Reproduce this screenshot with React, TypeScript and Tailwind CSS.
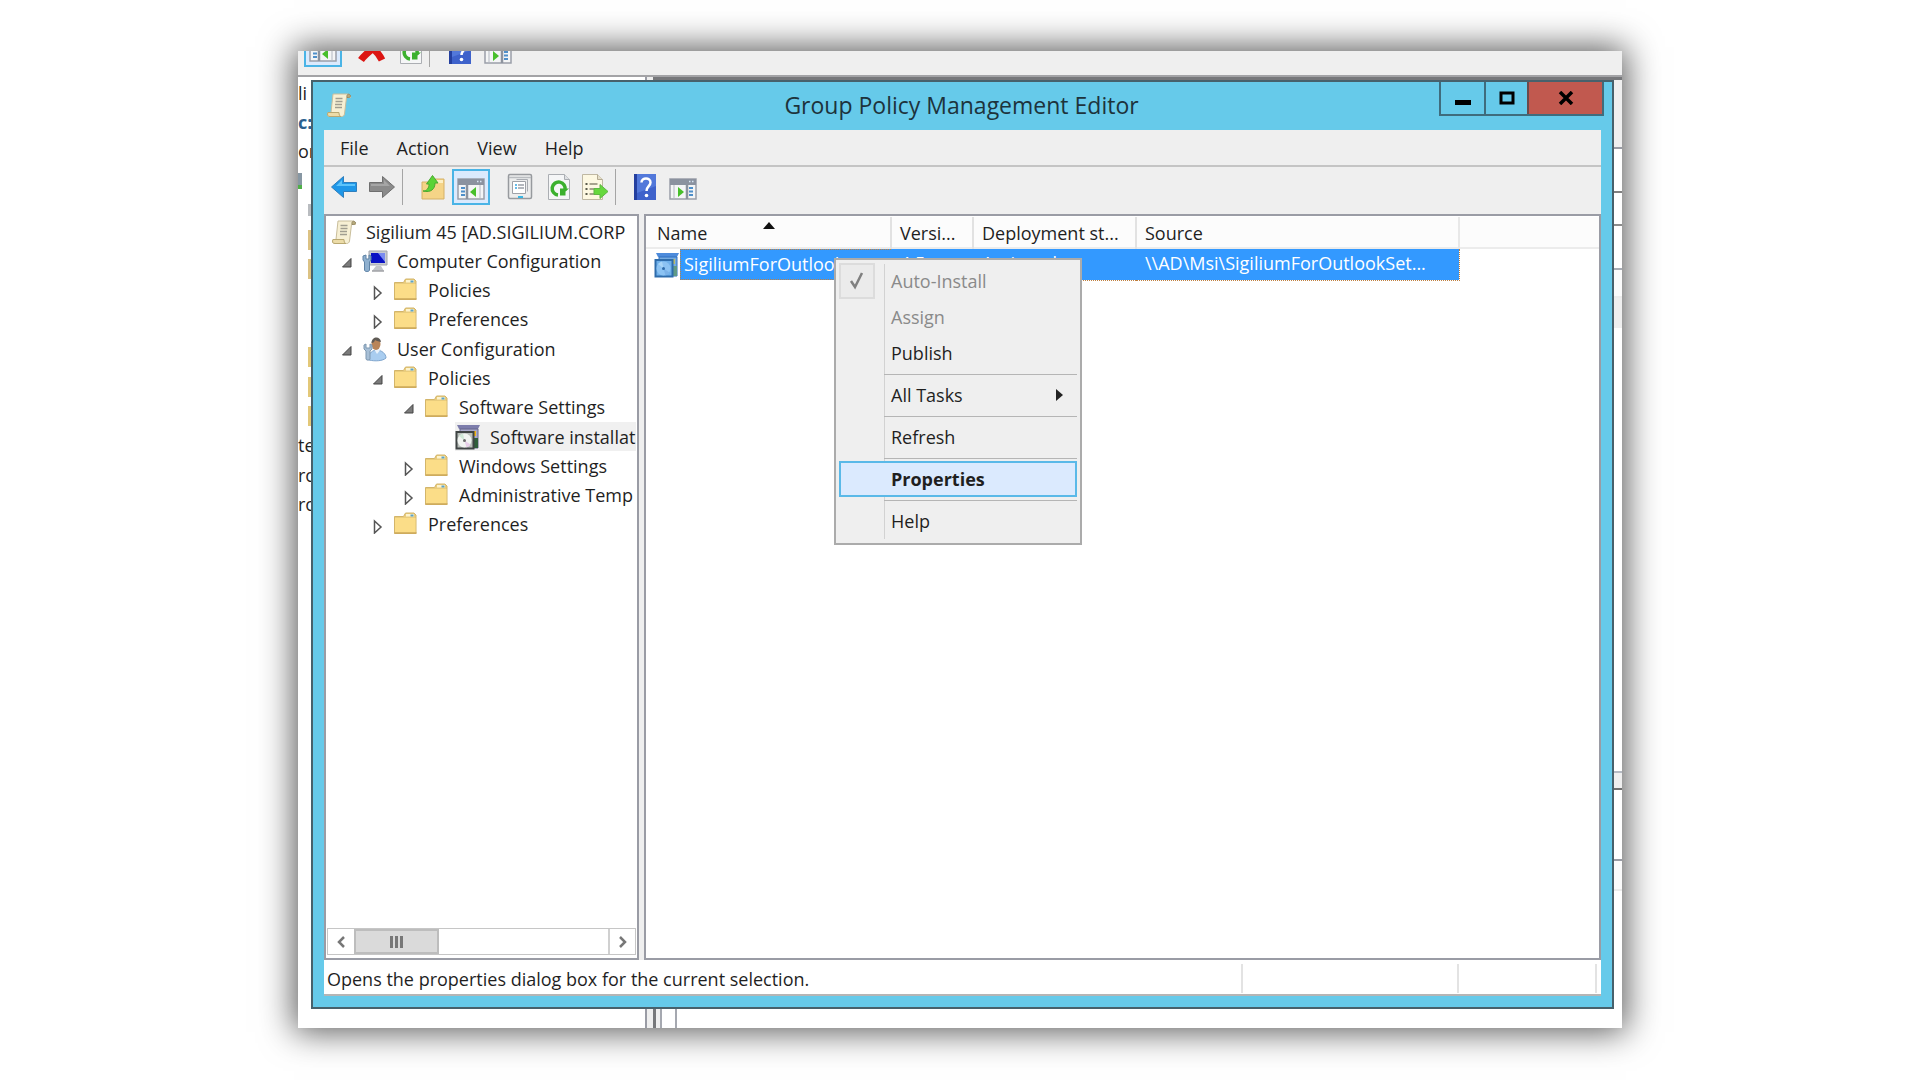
import type { ReactNode } from "react";

type TreeNode = {
  label: string;
  indent: string;
  icon: ReactNode;
  state?: "open" | "closed";
  selected?: boolean;
};

function ScrollIcon() {
  return (
    <svg width="26" height="26" viewBox="0 0 26 26" className="shrink-0">
      <path d="M7 2h14c2 0 4 1 3.500 3.500h-4L18.500 22c-.5 2-1.500 2.500-3 2.500H4c-2.500 0-3-1.500-2-4h3z" fill="#f7f0d4" stroke="#c9be9b" />
      <path d="M21 5.500c-.5-2 .5-4 2.500-3s1 3.500-2.500 3z" fill="#b9ab7c" stroke="#968a66" />
      <path d="M2 20.500h11c0 2 .5 4 2 4H4c-2.500 0-3-2-2-4z" fill="#ecdca8" stroke="#b9a871" />
      <path d="M9.500 6.500h7M9.500 9.500h7M9 12.500h7M9 15.500h7" stroke="#a19e90" strokeWidth="1.500" />
    </svg>
  );
}

function FolderIcon() {
  return (
    <svg width="26" height="26" viewBox="0 0 26 26" className="shrink-0">
      <path d="M1.500 5.500h9L12.500 2H21l2 2v18.500H1.500z" fill="#e9cc7c" stroke="#d3b56a" />
      <path d="M13 3h8v2.500h-8z" fill="#fdf3cd" />
      <path d="M17.500 3.500h3v2h-3z" fill="#5ba3c9" />
      <path d="M2 7h20.500v15H2z" fill="#fbdd88" />
      <path d="M1.500 22h22" stroke="#cda95a" strokeWidth="1.500" />
    </svg>
  );
}

function ComputerIcon() {
  return (
    <svg width="26" height="26" viewBox="0 0 26 26" className="shrink-0">
      <path d="M7 3h18v14H7z" fill="#c9ccd2" stroke="#a2a5ab" />
      <path d="M9 5h14v10H9z" fill="#0a12c4" />
      <path d="M16 5h7v9z" fill="#7b8cf0" />
      <path d="M14 18h5l3 5H10z" fill="#c3c5c9" />
      <path d="M10 23h12" stroke="#a0a2a6" strokeWidth="1.500" />
      <path d="M1 8v4l1.500 2V22c0 2 5 2 5 0v-8L9 12V8L7 7v4H4V7z" fill="#8fb0cf" stroke="#5f83a6" />
    </svg>
  );
}

function UserIcon() {
  return (
    <svg width="26" height="26" viewBox="0 0 26 26" className="shrink-0">
      <path d="M7 24c-1-6 2-9 7-10 6 0 10 4 10 8-3 3-11 3.500-17 2z" fill="#a9cdf0" stroke="#7fa5cd" />
      <path d="M12 13l3 5 4-5z" fill="#e9f2fb" />
      <ellipse cx="14" cy="8" rx="4.500" ry="6" fill="#b98458" />
      <path d="M9.500 7c0-7 9-7.500 9.500-1-3-.5-5-1.500-6-2-.5 2-1.500 3-3.500 3z" fill="#5f5a55" />
      <path d="M2 9v4l2 2v8c0 1.500 4 1.500 4 0v-8l2-2V9L8 8v4H4V8z" fill="#a7bfd6" stroke="#7d97b0" />
    </svg>
  );
}

function InstallIcon({ tinted = false }: { tinted?: boolean }) {
  return (
    <svg width="26" height="26" viewBox="0 0 26 26" className="shrink-0">
      <path d="M2 1h23l-2 4H4z" fill={tinted ? "#4d8bdb" : "#7d7dac"} />
      <path d="M5 5h18v19H5z" fill={tinted ? "#75abe0" : "#a9a9c9"} stroke={tinted ? "#2f6fc0" : "#66668c"} />
      <path d="M16 7h5v5h-5z" fill={tinted ? "#b7b96b" : "#f2b416"} />
      <path d="M19 14h4v10h-4z" fill={tinted ? "#5f9a86" : "#2f5f3b"} />
      <path d="M1.500 8H18.500V24.500H1.500z" fill={tinted ? "#6fb0ea" : "#b9bfba"} stroke={tinted ? "#2e6cab" : "#3f4444"} strokeWidth="2" />
      <circle cx="9.500" cy="16.500" r="7" fill={tinted ? "#8cc3f3" : "#f1f4f1"} />
      <path d="M9.500 16.500L4 12a7 7 0 0 1 4-2.500z" fill={tinted ? "#a8d5f8" : "#cfe8d6"} />
      <path d="M9.500 16.500l6 4a7 7 0 0 1-4 3z" fill={tinted ? "#7bb2e8" : "#e6cfe8"} />
      <circle cx="9.500" cy="16.500" r="1.500" fill={tinted ? "#2e6cab" : "#6b6b6b"} />
    </svg>
  );
}

function ArrowIcon({ forward = false }: { forward?: boolean }) {
  return forward ? (
    <svg width="28" height="26" viewBox="0 0 28 26">
      <path d="M1.500 8.500h13V2.500L26.500 13 14.500 23.500v-6h-13z" fill="#8b8b8b" stroke="#6f6f6f" strokeLinejoin="round" />
      <path d="M3 10h13V6l6 6H3z" fill="#a6a6a6" />
    </svg>
  ) : (
    <svg width="28" height="26" viewBox="0 0 28 26">
      <path d="M26.500 8.500h-13V2.500L1.500 13l12 10.500v-6h13z" fill="#1e97e8" stroke="#2f7fbd" strokeLinejoin="round" />
      <path d="M25 10H12V6l-6 6h19z" fill="#5cc4fb" />
    </svg>
  );
}

function FolderUpIcon() {
  return (
    <svg width="26" height="28" viewBox="0 0 26 28">
      <path d="M2 9h9l3-3h10v20H2z" fill="#f5d487" stroke="#d5b166" />
      <path d="M16 7h7v3h-7z" fill="#fdf0c4" />
      <path d="M3 18c4 0 6-3 6-7H6.500l6-8.500L18 10h-3c0 6-4 10-12 8z" fill="#5bd336" stroke="#4aa930" />
    </svg>
  );
}

// Console window with a side pane; the arrow points at or away from it
function PaneIcon({ side }: { side: "left" | "right" }) {
  const flip = side === "right" ? "translate(28 0) scale(-1 1)" : undefined;
  return (
    <svg width="28" height="24" viewBox="0 0 28 24">
      <path d="M1 2h26v20H1z" fill="#f4f5f6" stroke="#9a9fa9" strokeWidth="1.500" />
      <path d="M1 2h26v6H1z" fill="#8b929f" />
      <path d="M20 4.500h1.500M23 4.500h1.500" stroke="#d8e6f4" strokeWidth="1.500" />
      <g transform={flip}>
        <path d="M10 8v14" stroke="#8d939e" strokeWidth="2.500" />
        <path d="M4 11h4M4 14.500h4M4 18h4" stroke="#4f8fc9" strokeWidth="2" />
        <path d="M19 10v10l-6-5z" fill="#48bf2b" />
        <path d="M23 8v14" stroke="#b3b8c1" />
      </g>
    </svg>
  );
}

function PropertiesIcon() {
  return (
    <svg width="26" height="28" viewBox="0 0 26 28">
      <rect x="1.500" y="1.500" width="23" height="24" rx="1.500" fill="#eceded" stroke="#979a9e" strokeWidth="1.500" />
      <path d="M2 4.500h22" stroke="#b9bcc0" strokeWidth="1.500" />
      <path d="M5.500 8.500h13v12h-13z" fill="#fff" stroke="#9fa2a8" />
      <path d="M9.500 6.500h11v12" fill="none" stroke="#a9acb2" />
      <path d="M8 12h2M8 15h2" stroke="#39a5df" strokeWidth="1.500" />
      <path d="M11 12h6M11 15h6" stroke="#9aa0a8" strokeWidth="1.500" />
      <path d="M11 24h5" stroke="#39b6e3" strokeWidth="2" />
    </svg>
  );
}

function RefreshIcon() {
  return (
    <svg width="24" height="28" viewBox="0 0 24 28">
      <path d="M1.500 1.500h16l5 5v20h-21z" fill="#f5f6f7" stroke="#abaeb3" />
      <path d="M17.500 1.500v5h5" fill="#dfe1e4" stroke="#abaeb3" />
      <path d="M11 22a6.500 6.500 0 1 1 7-5" fill="none" stroke="#3bb02e" strokeWidth="3.500" />
      <path d="M13 15.500h9l-3.500 3v4H13z" fill="#3bb02e" />
    </svg>
  );
}

function ExportIcon() {
  return (
    <svg width="28" height="28" viewBox="0 0 28 28">
      <path d="M1.500 1.500h15l5 5v20h-20z" fill="#fdf8e2" stroke="#bfb8a3" />
      <path d="M16.500 1.500v5h5" fill="#e5dfca" stroke="#b4ab93" />
      <path d="M4.500 11h2M4.500 16h2M4.500 21h2" stroke="#5b5b4b" strokeWidth="2" />
      <path d="M8.500 11h8M8.500 16h6M8.500 21h6" stroke="#8b8772" strokeWidth="1.500" />
      <path d="M13 15.500h6v-4l8 7-8 7v-4h-6z" fill="#66d83d" stroke="#5fb644" />
    </svg>
  );
}

function HelpIcon() {
  return (
    <svg width="24" height="28" viewBox="0 0 24 28">
      <path d="M1 1h22v26H1z" fill="#3e62cb" />
      <path d="M1 1h3v26H1z" fill="#243f9f" />
      <path d="M4 1h19v12L4 20z" fill="#5278da" />
      <path d="M8.500 9.500c0-5.500 9-5.500 9 0 0 3.500-4 4-4 8.500" fill="none" stroke="#fff" strokeWidth="2.500" />
      <circle cx="13.500" cy="22.500" r="1.800" fill="#fff" />
    </svg>
  );
}

const tree: TreeNode[] = [
  { label: "Sigilium 45 [AD.SIGILIUM.CORP", indent: "pl-0", icon: <ScrollIcon /> },
  { label: "Computer Configuration", indent: "pl-0", icon: <ComputerIcon />, state: "open" },
  { label: "Policies", indent: "pl-[31px]", icon: <FolderIcon />, state: "closed" },
  { label: "Preferences", indent: "pl-[31px]", icon: <FolderIcon />, state: "closed" },
  { label: "User Configuration", indent: "pl-0", icon: <UserIcon />, state: "open" },
  { label: "Policies", indent: "pl-[31px]", icon: <FolderIcon />, state: "open" },
  { label: "Software Settings", indent: "pl-[62px]", icon: <FolderIcon />, state: "open" },
  { label: "Software installat", indent: "pl-[124px]", icon: <InstallIcon />, selected: true },
  { label: "Windows Settings", indent: "pl-[62px]", icon: <FolderIcon />, state: "closed" },
  { label: "Administrative Temp", indent: "pl-[62px]", icon: <FolderIcon />, state: "closed" },
  { label: "Preferences", indent: "pl-[31px]", icon: <FolderIcon />, state: "closed" },
];

function Expander({ state }: { state: "open" | "closed" }) {
  return (
    <button type="button" aria-label={state === "open" ? "Collapse" : "Expand"} className="flex w-[31px] shrink-0 justify-center pt-1">
      <svg width="14" height="16" viewBox="0 0 14 16">
        {state === "open" ? (
          <path d="M11 3.500V12H2.500z" fill="#7b7b7b" stroke="#444" />
        ) : (
          <path d="M3.500 3l6.500 6-6.500 6z" fill="#fff" stroke="#555" strokeWidth="1.500" />
        )}
      </svg>
    </button>
  );
}

function Tree() {
  return (
    <ul className="grid h-[322px] auto-rows-fr pl-1">
      {tree.map((node, i) => (
        <li key={i} className={`flex min-w-0 items-center ${node.indent}`}>
          {node.state && <Expander state={node.state} />}
          <span
            className={`flex h-full min-w-0 flex-1 items-center gap-[9px] overflow-hidden whitespace-nowrap ${
              node.selected ? "bg-[#f0f0f0]" : ""
            }`}
          >
            {node.icon}
            {node.label}
          </span>
        </li>
      ))}
    </ul>
  );
}

function Separator() {
  return <span className="h-9 w-px bg-[#a5a5a5]" />;
}

function Toolbar() {
  return (
    <div className="flex h-[47px] items-center pb-2 pl-[6px]">
      <button type="button" aria-label="Back"><ArrowIcon /></button>
      <button type="button" aria-label="Forward" className="ml-[10px] mr-[6px]"><ArrowIcon forward /></button>
      <Separator />
      <button type="button" aria-label="Up one level" className="ml-[17px] mr-[6px]"><FolderUpIcon /></button>
      <button
        type="button"
        aria-label="Show console tree"
        className="flex h-9 w-[38px] items-center justify-center border-2 border-[#4ab4e6] bg-[#dbeafd] pt-1"
      >
        <PaneIcon side="left" />
      </button>
      <button type="button" aria-label="Properties" className="ml-[17px]"><PropertiesIcon /></button>
      <button type="button" aria-label="Refresh" className="ml-[14px]"><RefreshIcon /></button>
      <button type="button" aria-label="Export list" className="ml-[10px] mr-[6px]"><ExportIcon /></button>
      <Separator />
      <button type="button" aria-label="Help" className="ml-[17px]"><HelpIcon /></button>
      <button type="button" aria-label="Show action pane" className="ml-3 pt-1"><PaneIcon side="right" /></button>
    </div>
  );
}

function MenuItem({ label, disabled = false, children }: { label: string; disabled?: boolean; children?: ReactNode }) {
  return (
    <button
      type="button"
      role="menuitem"
      disabled={disabled}
      className="flex h-9 w-full items-center justify-between pb-px pl-[52px] pr-[14px] text-left disabled:text-[#8a8a8a]"
    >
      {label}
      {children}
    </button>
  );
}

function MenuLine() {
  return <div className="ml-[45px] flex h-[6px] items-center"><span className="h-px flex-1 bg-[#b5b5b5]" /></div>;
}

function ContextMenu() {
  return (
    <div
      role="menu"
      className="absolute left-[188px] top-[42px] w-[248px] border-2 border-[#ababab] bg-[#efefef] p-[3px] pb-1"
    >
      <span className="absolute bottom-1 left-[48px] top-1 w-px bg-[#d2d2d2]" />
      <div className="relative">
        <span className="absolute left-0 top-0 flex size-9 items-center justify-center border-2 border-[#dcdcdc] bg-[#ebebeb]">
          <svg width="18" height="20" viewBox="0 0 18 20">
            <path d="M3 10l4 6 7-14" fill="none" stroke="#808080" strokeWidth="2.500" />
          </svg>
        </span>
        <MenuItem label="Auto-Install" disabled />
        <MenuItem label="Assign" disabled />
        <MenuItem label="Publish" />
        <MenuLine />
        <MenuItem label="All Tasks">
          <svg width="7" height="12" viewBox="0 0 7 12"><path d="M0 0l7 6-7 6z" fill="#222" /></svg>
        </MenuItem>
        <MenuLine />
        <MenuItem label="Refresh" />
        <MenuLine />
        <button
          type="button"
          role="menuitem"
          className="flex h-9 w-full items-center border-2 border-[#5ab9e8] bg-[#dbeafe] pl-[50px] font-bold"
        >
          Properties
        </button>
        <MenuLine />
        <MenuItem label="Help" />
      </div>
    </div>
  );
}

function PackageList() {
  return (
    <table className="w-full table-fixed border-collapse whitespace-nowrap text-left">
      <colgroup>
        <col className="w-[245px]" />
        <col className="w-[82px]" />
        <col className="w-[163px]" />
        <col className="w-[323px]" />
        <col />
      </colgroup>
      <thead>
        <tr className="h-[31px] border-b-2 border-[#ececec] bg-[#fcfcfc]">
          <th className="relative border-r-2 border-[#e2e2e2] pl-[11px] pt-[2px] font-normal">
            Name
            <svg width="12" height="7" viewBox="0 0 12 7" className="absolute left-[117px] top-[5px]">
              <path d="M6 0l6 7H0z" fill="#111" />
            </svg>
          </th>
          <th className="border-r-2 border-[#e2e2e2] pl-2 pt-[2px] font-normal">Versi...</th>
          <th className="border-r-2 border-[#e2e2e2] pl-2 pt-[2px] font-normal">Deployment st...</th>
          <th className="border-r-2 border-[#e8e8e8] pl-2 pt-[2px] font-normal">Source</th>
          <th />
        </tr>
      </thead>
      <tbody>
        <tr className="h-[31px] text-white">
          <td className="p-0">
            <div className="flex h-[31px] items-center pl-2">
              <InstallIcon tinted />
              <span className="flex h-full min-w-0 flex-1 items-center overflow-hidden border border-r-0 border-dotted border-[#c08040] bg-[#3399ff] pb-[2px] pl-[3px]">
                SigiliumForOutlook
              </span>
            </div>
          </td>
          <td className="border-y border-dotted border-[#c08040] bg-[#3399ff] pb-[2px] pl-[9px]">4.5</td>
          <td className="border-y border-dotted border-[#c08040] bg-[#3399ff] pb-[2px] pl-[9px]">Assigned</td>
          <td className="border border-l-0 border-dotted border-[#c08040] bg-[#3399ff] pb-[2px] pl-[9px]">
            \\AD\Msi\SigiliumForOutlookSet...
          </td>
          <td />
        </tr>
      </tbody>
    </table>
  );
}

function Editor() {
  return (
    <section className="z-10 col-start-1 row-start-1 mb-[19px] ml-[13px] mr-2 mt-[29px] flex flex-col border-2 border-[#47616c] bg-[#66caea]">
      <header className="flex h-12 items-start pl-[13px] pr-2">
        <div className="flex w-[158px] pt-[10px]"><ScrollIcon /></div>
        <h1 className="flex-1 pt-2 text-center text-[23px] leading-[30px] text-[#1d333c]">Group Policy Management Editor</h1>
        <div className="flex h-[34px] border-x-2 border-b-2 border-[#3f6c7d]">
          <button type="button" aria-label="Minimize" className="flex w-[45px] items-center justify-center border-r-2 border-[#3f6c7d]">
            <svg width="18" height="20" viewBox="0 0 18 20"><path d="M1 12h16v5H1z" fill="#000" /></svg>
          </button>
          <button type="button" aria-label="Maximize" className="flex w-[41px] items-center justify-center">
            <svg width="16" height="14" viewBox="0 0 16 14"><path d="M2 2h12v10H2z" fill="none" stroke="#000" strokeWidth="3" /></svg>
          </button>
          <button type="button" aria-label="Close" className="flex w-[75px] items-center justify-center border-l-2 border-[#6b4a4b] bg-[#c1594f]">
            <svg width="16" height="14" viewBox="0 0 16 14"><path d="M2 1l12 12M14 1L2 13" stroke="#000" strokeWidth="3.500" /></svg>
          </button>
        </div>
      </header>

      <div className="mx-[11px] mb-[11px] flex flex-1 flex-col bg-[#efefef]">
        <nav className="flex h-[37px] items-center gap-7 border-b-2 border-[#c4c4c4] pl-4">
          <button type="button">File</button>
          <button type="button">Action</button>
          <button type="button">View</button>
          <button type="button">Help</button>
        </nav>
        <Toolbar />

        <div className="flex flex-1 gap-[5px]">
          {/* Console tree */}
          <div className="flex w-[315px] shrink-0 flex-col justify-between border-2 border-[#9a9ca5] bg-white px-px pb-[3px] pt-px">
            <Tree />
            <div className="flex h-[27px] border border-[#c6c6c6] text-[#777]">
              <button type="button" aria-label="Scroll left" className="flex w-[26px] items-center justify-center">
                <svg width="10" height="14" viewBox="0 0 10 14"><path d="M8 2L3 7l5 5" fill="none" stroke="currentColor" strokeWidth="2.500" /></svg>
              </button>
              <div className="flex w-[85px] items-center justify-center gap-[2px] border-2 border-[#bdbdbd] bg-[#dadada]">
                <span className="h-3 w-[3px] bg-[#777]" />
                <span className="h-3 w-[3px] bg-[#777]" />
                <span className="h-3 w-[3px] bg-[#777]" />
              </div>
              <span className="flex-1" />
              <button type="button" aria-label="Scroll right" className="flex w-[27px] items-center justify-center border-l-2 border-[#d0d0d0]">
                <svg width="10" height="14" viewBox="0 0 10 14"><path d="M2 2l5 5-5 5" fill="none" stroke="currentColor" strokeWidth="2.500" /></svg>
              </button>
            </div>
          </div>

          {/* Package list */}
          <div className="relative min-w-0 flex-1 border-2 border-[#9a9ca5] bg-white pt-px">
            <PackageList />
            <ContextMenu />
          </div>
        </div>

        <footer className="flex h-9 items-center border-b-2 border-[#b5b5b5] bg-white pb-px pl-[3px] pr-1 pt-1">
          <p className="flex-1">Opens the properties dialog box for the current selection.</p>
          <span className="h-full w-[216px] border-l-2 border-[#e3e3e3]" />
          <span className="h-full w-[140px] border-x-2 border-[#e3e3e3]" />
        </footer>
      </div>
    </section>
  );
}

const backRows: ReactNode[] = [
  "li",
  <span className="font-bold text-[#2b5f8f]">c:</span>,
  "or",
  <span className="block h-4 w-1 border-b-4 border-[#4fb048] bg-[#8797a3]" />,
  <span className="ml-[10px] block h-3 w-1 bg-[#b9bcc0]" />,
  <span className="ml-[10px] block h-5 w-1 bg-[#dcc283]" />,
  <span className="ml-[10px] block h-5 w-1 bg-[#dcc283]" />,
  "",
  "",
  <span className="ml-[10px] block h-5 w-1 bg-[#e3c878]" />,
  <span className="ml-[10px] block h-5 w-1 bg-[#e3c878]" />,
  <span className="ml-[10px] block h-5 w-1 bg-[#e3c878]" />,
  "te",
  "ro",
  "ro",
];

// The parent console, mostly covered by the editor
function BackConsole() {
  return (
    <section aria-hidden="true" className="col-start-1 row-start-1 flex min-w-0 flex-col bg-[#efefef]">
      <div className="flex h-[26px] items-end overflow-hidden border-b-2 border-[#a3a3a6] pb-2 pl-[6px]">
        <span className="flex h-9 w-[38px] items-center justify-center border-2 border-[#4ab4e6] bg-[#dbeafd] pt-1">
          <PaneIcon side="left" />
        </span>
        <svg width="28" height="26" viewBox="0 0 28 26" className="mb-1 ml-4">
          <path d="M3 23c4-6 14-13 20-18M4 4c8 4 16 11 20 19" fill="none" stroke="#dc1512" strokeWidth="7" />
        </svg>
        <span className="mb-[2px] ml-[13px]"><RefreshIcon /></span>
        <span className="ml-[6px] h-9 w-px bg-[#a5a5a5]" />
        <span className="mb-[2px] ml-[18px]"><HelpIcon /></span>
        <span className="mb-[2px] ml-3"><PaneIcon side="right" /></span>
      </div>
      <div className="flex flex-1">
        <div className="w-[349px] border-r-2 border-[#9a9ca5] bg-white pt-px">
          <ul className="grid h-[441px] auto-rows-fr">
            {backRows.map((row, i) => (
              <li key={i} className="flex items-center">{row}</li>
            ))}
          </ul>
        </div>
        <div className="ml-[6px] flex flex-1 flex-col border-l-[3px] border-t-[3px] border-[#77787b]">
          <div className="h-[69px] border-b-2 border-[#9a9ca5]" />
          <div className="h-[44px] border-b-2 border-[#808080] bg-white" />
          <div className="h-[33px] border-b-2 border-[#8c8c8c] bg-white" />
          <div className="h-[44px] border-b-2 border-[#a9adb5] bg-white" />
          <div className="h-[28px] border-b-2 border-[#ececec] bg-[#fbfbfb]" />
          <div className="h-[30px]" />
          <div className="h-[445px] border-b-2 border-[#b5bac3] bg-white" />
          <div className="h-[17px] border-b-2 border-[#707070]" />
          <div className="flex flex-1 border-l-4 border-[#efefef]">
            <div className="flex flex-1 flex-col border-l-2 border-[#a5a8b0] bg-white">
              <div className="h-[71px] border-b-2 border-[#9a9ca5]" />
              <div className="h-[30px] border-b-2 border-[#ececec] bg-[#fbfbfb]" />
              <div className="ml-[13px] flex-1 border-l-2 border-[#a5a8b0]" />
            </div>
          </div>
        </div>
      </div>
    </section>
  );
}

export default function App() {
  return (
    <main className="grid min-h-screen bg-white px-[298px] pb-[52px] pt-[51px] font-['Open_Sans','Noto_Sans',sans-serif] text-[18px] leading-6 text-[#1f1f1f]">
      <div className="grid overflow-hidden shadow-[0_0_32px_4px_rgba(0,0,0,0.65)]">
        <BackConsole />
        <Editor />
      </div>
    </main>
  );
}
